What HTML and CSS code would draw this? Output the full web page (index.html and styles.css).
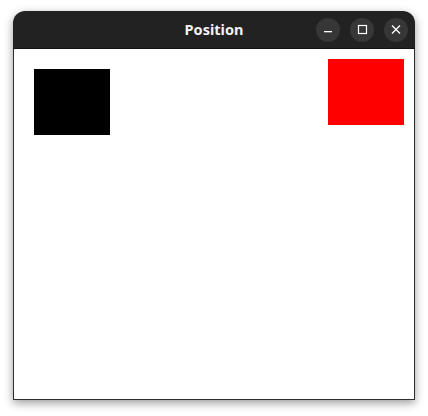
FILE: index.html
```html
<!DOCTYPE html>
<html>
<head>
<meta charset="utf-8">
<link rel="stylesheet" href="styles.css">
</head>
<body>
<div class="window">
  <div class="titlebar">
    <div class="title">Position</div>
    <div class="controls">
      <span class="btn"><svg width="24" height="24" viewBox="0 0 24 24"><rect x="8" y="13" width="8" height="1.3" fill="#fff"/></svg></span>
      <span class="btn"><svg width="24" height="24" viewBox="0 0 24 24"><rect x="8.5" y="7.5" width="8" height="8" fill="none" stroke="#fff" stroke-width="1.2"/></svg></span>
      <span class="btn"><svg width="24" height="24" viewBox="0 0 24 24"><path d="M8 7.5 L16 15.5 M16 7.5 L8 15.5" stroke="#fff" stroke-width="1.3" fill="none"/></svg></span>
    </div>
  </div>
  <div class="content">
    <div class="box black"></div>
    <div class="box red"></div>
  </div>
</div>
</body>
</html>
```
FILE: styles.css
```css
html, body {
  margin: 0;
  padding: 0;
  background: #ffffff;
}
body {
  min-height: 416px;
  padding-top: 11px;
  padding-left: 13px;
  box-sizing: border-box;
}
.window {
  width: 402px;
  height: 389px;
  border-radius: 12px 12px 0 0;
  box-shadow: 0 3px 10px rgba(0,0,0,0.4);
  display: flex;
  flex-direction: column;
  overflow: hidden;
}
.titlebar {
  height: 37px;
  background: #222222;
  border-bottom: 1px solid #111;
  position: relative;
  display: flex;
  align-items: center;
  justify-content: center;
  flex-shrink: 0;
}
.title {
  color: #f2f2f2;
  font-family: "Noto Sans", "DejaVu Sans", sans-serif;
  font-weight: bold;
  font-size: 14.5px;
  margin-top: -1px;
}
.controls {
  position: absolute;
  right: 7px;
  top: 7px;
  display: flex;
  gap: 10px;
}
.btn {
  width: 24px;
  height: 24px;
  border-radius: 50%;
  background: #373737;
  display: block;
}
.btn svg {
  display: block;
}
.content {
  flex: 1;
  background: #ffffff;
  border: 1px solid #2e2e2e;
  border-top: none;
  display: flex;
  justify-content: space-between;
  align-items: flex-start;
}
.box {
  width: 76px;
  height: 66px;
}
.black {
  background: #000000;
  margin: 20px 0 0 20px;
}
.red {
  background: #ff0000;
  margin: 10px 10px 0 0;
}
```
